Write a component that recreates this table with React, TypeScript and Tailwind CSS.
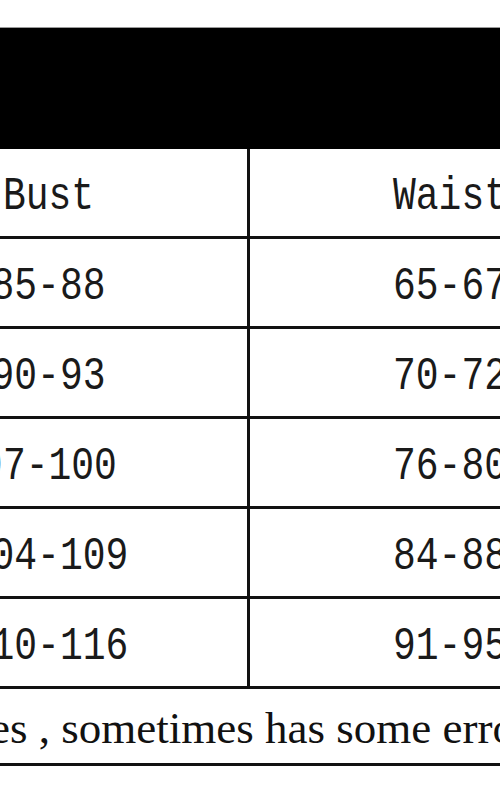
import React from 'react';

const rows = [
  ['85-88', '65-67'],
  ['90-93', '70-72'],
  ['97-100', '76-80'],
  ['104-109', '84-88'],
  ['110-116', '91-95'],
];

const Cell: React.FC<{ text: string; last?: boolean }> = ({ text, last }) => (
  <div
    className={`w-[400px] shrink-0 flex items-center justify-center pt-[9px] ${
      last ? '' : 'border-r-[3px] border-[#111]'
    }`}
  >
    <span
      className="inline-block scale-y-[1.22] text-[38px] leading-none text-[#1a1a1a]"
      style={{ fontFamily: '"Liberation Mono", "DejaVu Sans Mono", monospace' }}
    >
      {text}
    </span>
  </div>
);

export default function App() {
  return (
    <div className="w-[500px] h-[800px] bg-white overflow-hidden">
      <div className="h-[27px]" />
      {/* Black title band */}
      <div className="h-[122px] bg-black border-t border-[#9a9a9a]" />

      {/* Size table, cropped on both sides */}
      <div className="ml-[-150px] w-[800px]">
        <div className="flex h-[90px] border-b-[3px] border-[#111]">
          <Cell text="Bust" />
          <Cell text="Waist" last />
        </div>
        {rows.map((r) => (
          <div key={r[0]} className="flex h-[90px] border-b-[3px] border-[#111]">
            <Cell text={r[0]} />
            <Cell text={r[1]} last />
          </div>
        ))}
      </div>

      {/* Note row */}
      <div className="h-[77px] border-b-[3px] border-[#111] flex items-center overflow-hidden">
        <span
          className="ml-[-10px] whitespace-nowrap text-[45px] leading-none text-[#111] pt-[4px]"
          style={{ fontFamily: '"Liberation Serif", "Times New Roman", serif' }}
        >
          es , sometimes has some errors
        </span>
      </div>
    </div>
  );
}
